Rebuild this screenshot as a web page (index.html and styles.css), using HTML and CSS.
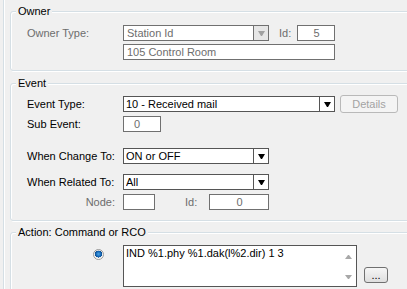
FILE: index.html
```html
<!DOCTYPE html>
<html lang="en">
<head>
  <meta charset="UTF-8">
  <title>Event Editor</title>
  <link rel="stylesheet" href="styles.css">
</head>
<body>
  <div class="page">
    <div class="group owner">
      <div class="legend">Owner</div>
      <div class="row r-owner">
        <span class="label dim">Owner Type:</span>
        <div class="field combo dis w146">
          <span class="val">Station Id</span>
          <span class="drop"><svg width="7" height="5" viewBox="0 0 7 5"><polygon points="0,0 7,0 4,5 3,5" fill="#a0a0a0"/></svg></span>
        </div>
        <span class="id-label dim">Id:</span>
        <div class="field dis w38 center">5</div>
      </div>
      <div class="row r-room">
        <span class="label"></span>
        <div class="field dis w212">105 Control Room</div>
      </div>
    </div>

    <div class="group event">
      <div class="legend">Event</div>
      <div class="row r-type">
        <span class="label">Event Type:</span>
        <div class="field combo w212">
          <span class="val">10 - Received mail</span>
          <span class="drop"><svg width="7" height="5" viewBox="0 0 7 5"><polygon points="0,0 7,0 4,5 3,5" fill="#000"/></svg></span>
        </div>
        <button class="btn details">Details</button>
      </div>
      <div class="row r-sub">
        <span class="label">Sub Event:</span>
        <div class="field dis w38 num">0</div>
      </div>
      <div class="row r-change">
        <span class="label">When Change To:</span>
        <div class="field combo w146">
          <span class="val">ON or OFF</span>
          <span class="drop"><svg width="7" height="5" viewBox="0 0 7 5"><polygon points="0,0 7,0 4,5 3,5" fill="#000"/></svg></span>
        </div>
      </div>
      <div class="row r-related">
        <span class="label">When Related To:</span>
        <div class="field combo w146">
          <span class="val">All</span>
          <span class="drop"><svg width="7" height="5" viewBox="0 0 7 5"><polygon points="0,0 7,0 4,5 3,5" fill="#000"/></svg></span>
        </div>
      </div>
      <div class="row r-node">
        <span class="label right dim">Node:</span>
        <div class="field dis w32"></div>
        <span class="node-id dim">Id:</span>
        <div class="field dis w60 center">0</div>
      </div>
    </div>

    <div class="group action">
      <div class="legend">Action: Command or RCO</div>
      <div class="row r-action">
        <span class="label radio-cell"><span class="radio"></span></span>
        <div class="memo">
          <div class="memo-text">IND %1.phy %1.dak(l%2.dir) 1 3</div>
          <div class="scroll">
            <svg width="7" height="4" viewBox="0 0 7 4"><polygon points="3,0 4,0 7,4 0,4" fill="#a8a8a8"/></svg>
            <svg width="7" height="4" viewBox="0 0 7 4"><polygon points="0,0 7,0 4,4 3,4" fill="#a8a8a8"/></svg>
          </div>
        </div>
        <button class="btn more">...</button>
      </div>
    </div>
  </div>
</body>
</html>
```

FILE: styles.css
```css
* { box-sizing: border-box; }

body {
  margin: 0;
  background: #f0f0f0;
  font-family: "Liberation Sans", Arial, sans-serif;
  font-size: 11px;
  color: #000;
  overflow: hidden;
}

.page {
  height: 289px;
  margin-left: 3px;
  border-left: 1px solid #d5dfe5;
  box-shadow: inset 1px 0 0 #fff;
  padding: 11px 0 0 6px;
  overflow: hidden;
}

/* group boxes */
.group {
  border: 1px solid #d5dfe5;
  border-radius: 3px;
  box-shadow: 1px 1px 0 #fff, inset 1px 1px 0 #fff;
  margin-right: -20px;
  padding: 0 0 10px 16px;
}
.event { margin-top: 12px; }
.action { margin-top: 11px; padding-bottom: 40px; }

.legend {
  display: table;
  margin: -7px 0 0 -11px;
  padding: 0 2px;
  background: #f0f0f0;
  line-height: 13px;
}

/* rows */
.row {
  display: flex;
  align-items: center;
  height: 16px;
}
.r-owner { margin-top: 7px; }
.r-room { margin-top: 3px; }
.r-type { margin-top: 5px; height: 18px; }
.r-sub { margin-top: 3px; }
.r-change { margin-top: 16px; }
.r-related { margin-top: 10px; }
.r-node { margin-top: 4px; }
.r-action { margin-top: 6px; height: 42px; align-items: flex-start; }

.label {
  width: 96px;
  flex: none;
  white-space: nowrap;
}
.label.right { text-align: right; padding-right: 8px; }
.dim { color: #6d6d6d; }

.id-label { width: 28px; padding-left: 10px; }
.node-id { width: 54px; padding-left: 30px; }

/* fields */
.field {
  flex: none;
  height: 16px;
  border: 1px solid #555;
  background: #fff;
  padding: 0 2px;
  line-height: 14px;
  white-space: nowrap;
  overflow: hidden;
}
.field.dis { border-color: #707070; color: #6d6d6d; padding-left: 3px; }
.field.center { text-align: center; }
.field.num { padding-left: 10px; }

.w32 { width: 32px; }
.w38 { width: 38px; }
.w60 { width: 60px; }
.w146 { width: 146px; }
.w212 { width: 212px; }

.combo {
  display: flex;
  padding-right: 0;
}
.combo .val { flex: 1; overflow: hidden; }
.combo .drop {
  width: 15px;
  flex: none;
  border-left: 1px solid #555;
  display: flex;
  align-items: center;
  justify-content: center;
}
.combo.dis .drop { border-left-color: #707070; background: #e6e6e6; }

/* buttons */
.btn {
  font-family: inherit;
  font-size: 11px;
  padding: 0;
  border-radius: 3px;
  flex: none;
}
.details {
  width: 58px;
  height: 18px;
  margin-left: 5px;
  border: 1px solid #b9b9b9;
  background: #f4f4f4;
  color: #a3a3a3;
}
.more {
  align-self: flex-end;
  width: 24px;
  height: 16px;
  margin: 0 0 4px 7px;
  border: 1px solid #707070;
  background: linear-gradient(#f6f6f6, #dedede);
  color: #000;
  line-height: 10px;
}

/* action */
.radio-cell {
  display: flex;
  justify-content: flex-end;
  padding: 4px 19px 0 0;
}
.radio {
  width: 11px;
  height: 11px;
  border-radius: 50%;
  border: 1px solid #9a9a9a;
  background: radial-gradient(circle at 50% 45%, #4aa6e8 0, #1566b5 2.5px, #0c4f92 3.4px, #e8e8e8 3.6px, #fff 5px);
}

.memo {
  width: 234px;
  height: 42px;
  flex: none;
  display: flex;
  border: 1px solid #555;
  background: #fff;
}
.memo-text {
  flex: 1;
  padding: 1px 2px;
  line-height: 13px;
  white-space: nowrap;
}
.scroll {
  width: 16px;
  display: flex;
  flex-direction: column;
  justify-content: space-between;
  align-items: center;
  padding: 9px 0 7px;
}
```
